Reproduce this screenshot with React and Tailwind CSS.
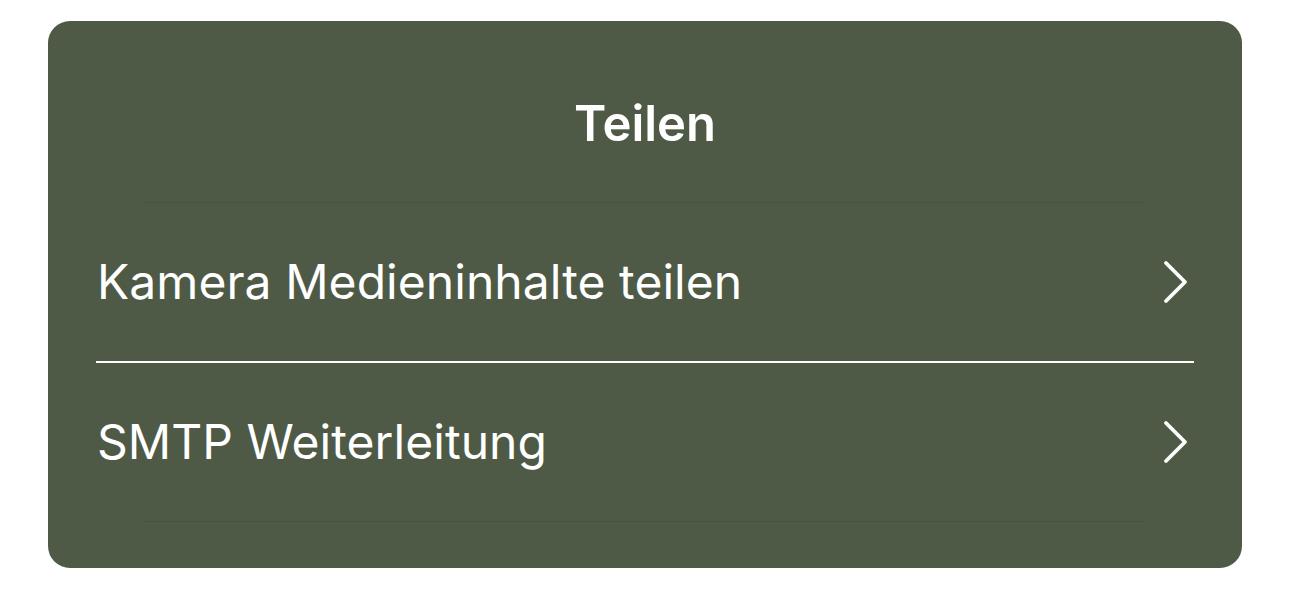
const rows = ["Kamera Medieninhalte teilen", "SMTP Weiterleitung"];

function Row({ label }) {
  return (
    <div className="flex h-[158px] items-center justify-between pl-[49px] pr-[49px]">
      <span className="text-[48px] leading-none tracking-[0.06px] text-white">{label}</span>
      <svg width="30" height="46" viewBox="0 0 30 46" fill="none" className="mr-[2px]">
        <path d="M5 4 L24 23 L5 42" stroke="white" strokeWidth="3.8" strokeLinecap="round" strokeLinejoin="round" />
      </svg>
    </div>
  );
}

export default function App() {
  return (
    <div className="min-h-screen bg-white pt-[21px] font-['Inter',sans-serif]">
      <div className="mx-[48px] h-[547px] overflow-hidden rounded-[22px] bg-[#4e5a45]">
        <div className="flex h-[181px] justify-center pt-[73px]">
          <h2 className="text-[49px] font-semibold leading-[60px] text-white">Teilen</h2>
        </div>
        <div className="ml-[95px] mr-[98px] h-px bg-[#47523f]" />
        <Row label={rows[0]} />
        <div className="mx-[48px] h-[2px] bg-white" />
        <Row label={rows[1]} />
        <div className="ml-[95px] mr-[98px] h-px bg-[#47523f]" />
      </div>
    </div>
  );
}
